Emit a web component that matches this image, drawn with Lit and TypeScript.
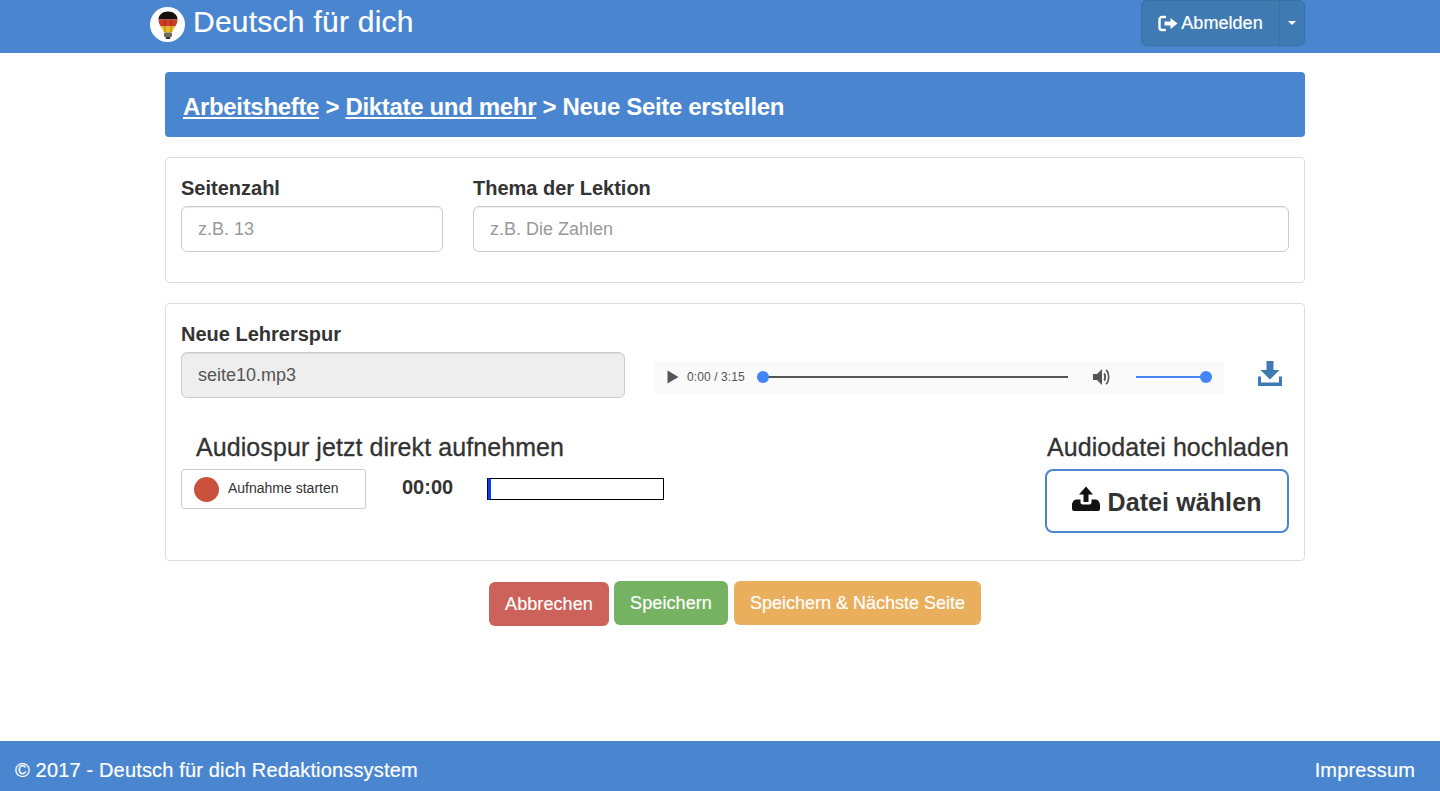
import { LitElement, html, css } from 'lit';
import { customElement } from 'lit/decorators.js';

@customElement('app-root')
export class AppRoot extends LitElement {
  static styles = css`
    :host {
      display: flex;
      flex-direction: column;
      height: 791px;
      font-family: 'Liberation Sans', Arial, sans-serif;
      color: #333;
      background: #fff;
      font-size: 18px;
    }
    * { box-sizing: border-box; }

    .navbar {
      height: 53px;
      background: #4a86cf;
      padding: 0 135px 0 150px;
      display: flex;
      justify-content: space-between;
      align-items: flex-start;
      flex: none;
    }
    .brand {
      display: flex;
      align-items: center;
      gap: 8px;
      height: 44px;
      color: #fff;
      font-size: 30px;
      letter-spacing: 0.25px;
      -webkit-text-stroke: 0.2px #fff;
    }
    .logo {
      width: 35px;
      height: 35px;
      margin-top: 5px;
      border-radius: 50%;
      background: #fff;
      display: flex;
      align-items: center;
      justify-content: center;
    }
    .logout {
      display: flex;
      width: 164px;
      height: 46px;
      background: #3f7ab3;
      border: 1px solid #39709f;
      border-radius: 6px;
      color: #fff;
      font-size: 18px;
      -webkit-text-stroke: 0.2px #fff;
    }
    .logout-main {
      width: 138px;
      flex: none;
      display: flex;
      align-items: center;
      justify-content: center;
      gap: 3px;
      border-right: 1px solid #39709f;
      letter-spacing: 0.05px;
    }
    .logout-caret {
      flex: 1;
      display: flex;
      align-items: center;
      justify-content: center;
    }
    .caret {
      width: 0;
      height: 0;
      border-left: 4px solid transparent;
      border-right: 4px solid transparent;
      border-top: 4px solid #fff;
    }

    main {
      width: 1140px;
      margin: 19px 0 0 165px;
      flex: 1;
    }
    .crumbs {
      height: 65px;
      background: #4a86cf;
      border-radius: 4px;
      color: #fff;
      font-size: 24px;
      font-weight: 700;
      padding: 4px 18px 0;
      display: flex;
      align-items: center;
      letter-spacing: -0.33px;
      white-space: pre;
    }
    .crumbs a { color: #fff; text-decoration: underline; }

    .panel {
      border: 1px solid #ddd;
      border-radius: 4px;
      padding: 15px;
      margin-top: 20px;
    }
    .fields {
      height: 126px;
      display: grid;
      grid-template-columns: 262px 1fr;
      column-gap: 30px;
    }
    label {
      display: block;
      font-weight: 700;
      font-size: 20px;
      line-height: 30px;
    }
    .input {
      height: 46px;
      margin-top: 3px;
      border: 1px solid #ccc;
      border-radius: 6px;
      padding: 0 16px;
      display: flex;
      align-items: center;
      font-size: 18px;
      color: #999;
      box-shadow: inset 0 1px 1px rgba(0, 0, 0, 0.075);
    }
    .input.filled { background: #eee; color: #555; }

    .track-panel { height: 258px; padding-top: 15px; }
    .track-top {
      display: flex;
      align-items: flex-start;
    }
    .file-col { width: 444px; flex: none; }
    .file-col .input { margin-top: 3px; }

    .player {
      width: 569px;
      height: 32px;
      margin: 42px 0 0 30px;
      background: #fafafa;
      display: flex;
      align-items: center;
      padding-left: 12px;
      flex: none;
    }
    .time {
      font-size: 12px;
      color: #555;
      margin-left: 8px;
      width: 70px;
      flex: none;
      letter-spacing: 0.1px;
    }
    .seek {
      width: 311px;
      height: 2px;
      background: #555;
      position: relative;
      flex: none;
    }
    .dot {
      position: absolute;
      width: 12px;
      height: 12px;
      border-radius: 50%;
      background: #4285f4;
      top: -5px;
    }
    .seek .dot { left: 0; }
    .speaker { margin-left: 24px; flex: none; display: block; }
    .volume {
      width: 76px;
      height: 2px;
      background: #4285f4;
      position: relative;
      margin-left: 24px;
      flex: none;
    }
    .volume .dot { right: 0; }
    .download { margin: 42px 0 0 34px; flex: none; display: block; }

    .track-bottom {
      display: flex;
      justify-content: space-between;
      margin-top: 34px;
    }
    h3 {
      margin: 0;
      font-size: 25px;
      font-weight: 400;
      line-height: 30px;
      letter-spacing: 0.08px;
      -webkit-text-stroke: 0.3px #333;
    }
    .record h3 { padding-left: 15px; }
    .record-row {
      display: flex;
      align-items: center;
      margin-top: 7px;
    }
    .rec-btn {
      width: 185px;
      height: 40px;
      border: 1px solid #ccc;
      border-radius: 3px;
      display: flex;
      align-items: center;
      padding-left: 12px;
      gap: 9px;
      font-size: 14px;
      color: #333;
    }
    .rec-btn span:last-child { margin-top: -2px; }
    .rec-dot {
      width: 25px;
      height: 25px;
      border-radius: 50%;
      background: #cc513d;
    }
    .timer {
      width: 86px;
      margin-left: 36px;
      font-size: 20px;
      font-weight: 700;
      margin-top: -4px;
    }
    .meter {
      width: 176px;
      height: 22px;
      border: 1px solid #000;
      border-left: 3px solid #0a3cff;
      box-shadow: -1px 0 0 #000;
    }
    .upload { width: 244px; }
    .upload h3 { text-align: right; white-space: nowrap; }
    .file-btn {
      margin-top: 7px;
      height: 64px;
      padding-top: 2px;
      border: 2px solid #4a86cf;
      border-radius: 8px;
      display: flex;
      align-items: center;
      justify-content: center;
      gap: 7px;
      font-size: 25px;
      font-weight: 700;
      letter-spacing: 0.1px;
    }
    .file-btn svg { margin-top: -6px; }

    .actions {
      display: flex;
      justify-content: center;
      align-items: flex-start;
      gap: 5px;
      margin-top: 20px;
    }
    .btn {
      height: 44px;
      border-radius: 6px;
      color: #fff;
      font-size: 18px;
      display: flex;
      align-items: center;
      justify-content: center;
      letter-spacing: 0.08px;
      -webkit-text-stroke: 0.2px #fff;
    }
    .danger { width: 120px; margin-top: 1px; background: #cc6259; }
    .success { width: 114px; background: #75b362; }
    .warning { width: 247px; margin-left: 1px; background: #e9af5c; letter-spacing: 0; }

    footer {
      height: 50px;
      flex: none;
      background: #4a86cf;
      color: #fff;
      font-size: 20px;
      padding: 8px 25px 0 15px;
      display: flex;
      justify-content: space-between;
      align-items: center;
      letter-spacing: 0.16px;
      -webkit-text-stroke: 0.2px #fff;
    }
  `;

  render() {
    return html`
      <header class="navbar">
        <div class="brand">
          <span class="logo">
            <svg width="20" height="28" viewBox="0 0 20 28">
              <path d="M10 0.500C4.500 0.500 0.500 4 0.500 8.500h19C19.500 4 15.500 0.500 10 0.500z" fill="#16110f" />
              <path d="M0.500 8.500c0 2.500.8 4.800 2.200 7h14.600c1.400-2.200 2.200-4.500 2.200-7z" fill="#cf3a22" />
              <path d="M2.700 15.500c1.200 1.900 2.600 3.500 3 6h8.600c.4-2.500 1.800-4.100 3-6z" fill="#eab91d" />
              <path d="M7 2v19M13 2v19" stroke="#000" stroke-opacity="0.250" stroke-width="1" />
              <rect x="6" y="21.500" width="8" height="4.500" rx="1" fill="#6f6a5e" />
              <rect x="7.500" y="26" width="5" height="2" rx="1" fill="#333" />
            </svg>
          </span>
          <span>Deutsch für dich</span>
        </div>
        <div class="logout">
          <div class="logout-main">
            <svg width="20" height="17" viewBox="0 0 20 17">
              <path d="M7 2H4A2.500 2.500 0 0 0 1.500 4.500v8A2.500 2.500 0 0 0 4 15h3" fill="none" stroke="#fff" stroke-width="2.400" stroke-linecap="round" />
              <path d="M6.500 6.500h6V3l7 5.500-7 5.500v-3.500h-6z" fill="#fff" />
            </svg>
            <span>Abmelden</span>
          </div>
          <div class="logout-caret"><span class="caret"></span></div>
        </div>
      </header>

      <main>
        <div class="crumbs"><a>Arbeitshefte</a> &gt; <a>Diktate und mehr</a> &gt; Neue Seite erstellen</div>

        <section class="panel fields">
          <div>
            <label>Seitenzahl</label>
            <div class="input">z.B. 13</div>
          </div>
          <div>
            <label>Thema der Lektion</label>
            <div class="input">z.B. Die Zahlen</div>
          </div>
        </section>

        <section class="panel track-panel">
          <div class="track-top">
            <div class="file-col">
              <label>Neue Lehrerspur</label>
              <div class="input filled">seite10.mp3</div>
            </div>
            <div class="player">
              <svg width="12" height="14" viewBox="0 0 12 14"><path d="M0.500 0.500L11.500 7L0.500 13.500z" fill="#555" /></svg>
              <span class="time">0:00 / 3:15</span>
              <div class="seek"><span class="dot"></span></div>
              <svg class="speaker" width="20" height="20" viewBox="0 0 20 20">
                <path d="M1 7h4l5-5v16l-5-5H1z" fill="#555" />
                <path d="M12 6.500c1.500 1 1.500 6 0 7" fill="none" stroke="#555" stroke-width="2" />
                <path d="M14 3c3.500 2.500 3.500 11.500 0 14" fill="none" stroke="#555" stroke-width="1.600" />
              </svg>
              <div class="volume"><span class="dot"></span></div>
            </div>
            <svg class="download" width="24" height="26" viewBox="0 0 24 26">
              <path d="M8.500 0h7v9h6L12 18.500 2.500 9h6z" fill="#3f7ab3" />
              <path d="M0 15.500h3v6h18v-6h3V25H0z" fill="#3f7ab3" />
            </svg>
          </div>

          <div class="track-bottom">
            <div class="record">
              <h3>Audiospur jetzt direkt aufnehmen</h3>
              <div class="record-row">
                <div class="rec-btn"><span class="rec-dot"></span><span>Aufnahme starten</span></div>
                <div class="timer">00:00</div>
                <div class="meter"></div>
              </div>
            </div>
            <div class="upload">
              <h3>Audiodatei hochladen</h3>
              <div class="file-btn">
                <svg width="28" height="26" viewBox="0 0 28 26">
                  <path d="M11.500 16V8.500H7L14 0.500l7 8h-4.500V16z" fill="#111" />
                  <path d="M0 19C0 16.500 2 13.500 4 13.500h4.500v3a2 2 0 0 0 2 2h7a2 2 0 0 0 2-2v-3H24c2 0 4 3 4 5.500V23a2 2 0 0 1-2 2H2a2 2 0 0 1-2-2z" fill="#111" />
                </svg>
                <span>Datei wählen</span>
              </div>
            </div>
          </div>
        </section>

        <div class="actions">
          <div class="btn danger">Abbrechen</div>
          <div class="btn success">Speichern</div>
          <div class="btn warning">Speichern &amp; Nächste Seite</div>
        </div>
      </main>

      <footer>
        <span>© 2017 - Deutsch für dich Redaktionssystem</span>
        <span>Impressum</span>
      </footer>
    `;
  }
}
